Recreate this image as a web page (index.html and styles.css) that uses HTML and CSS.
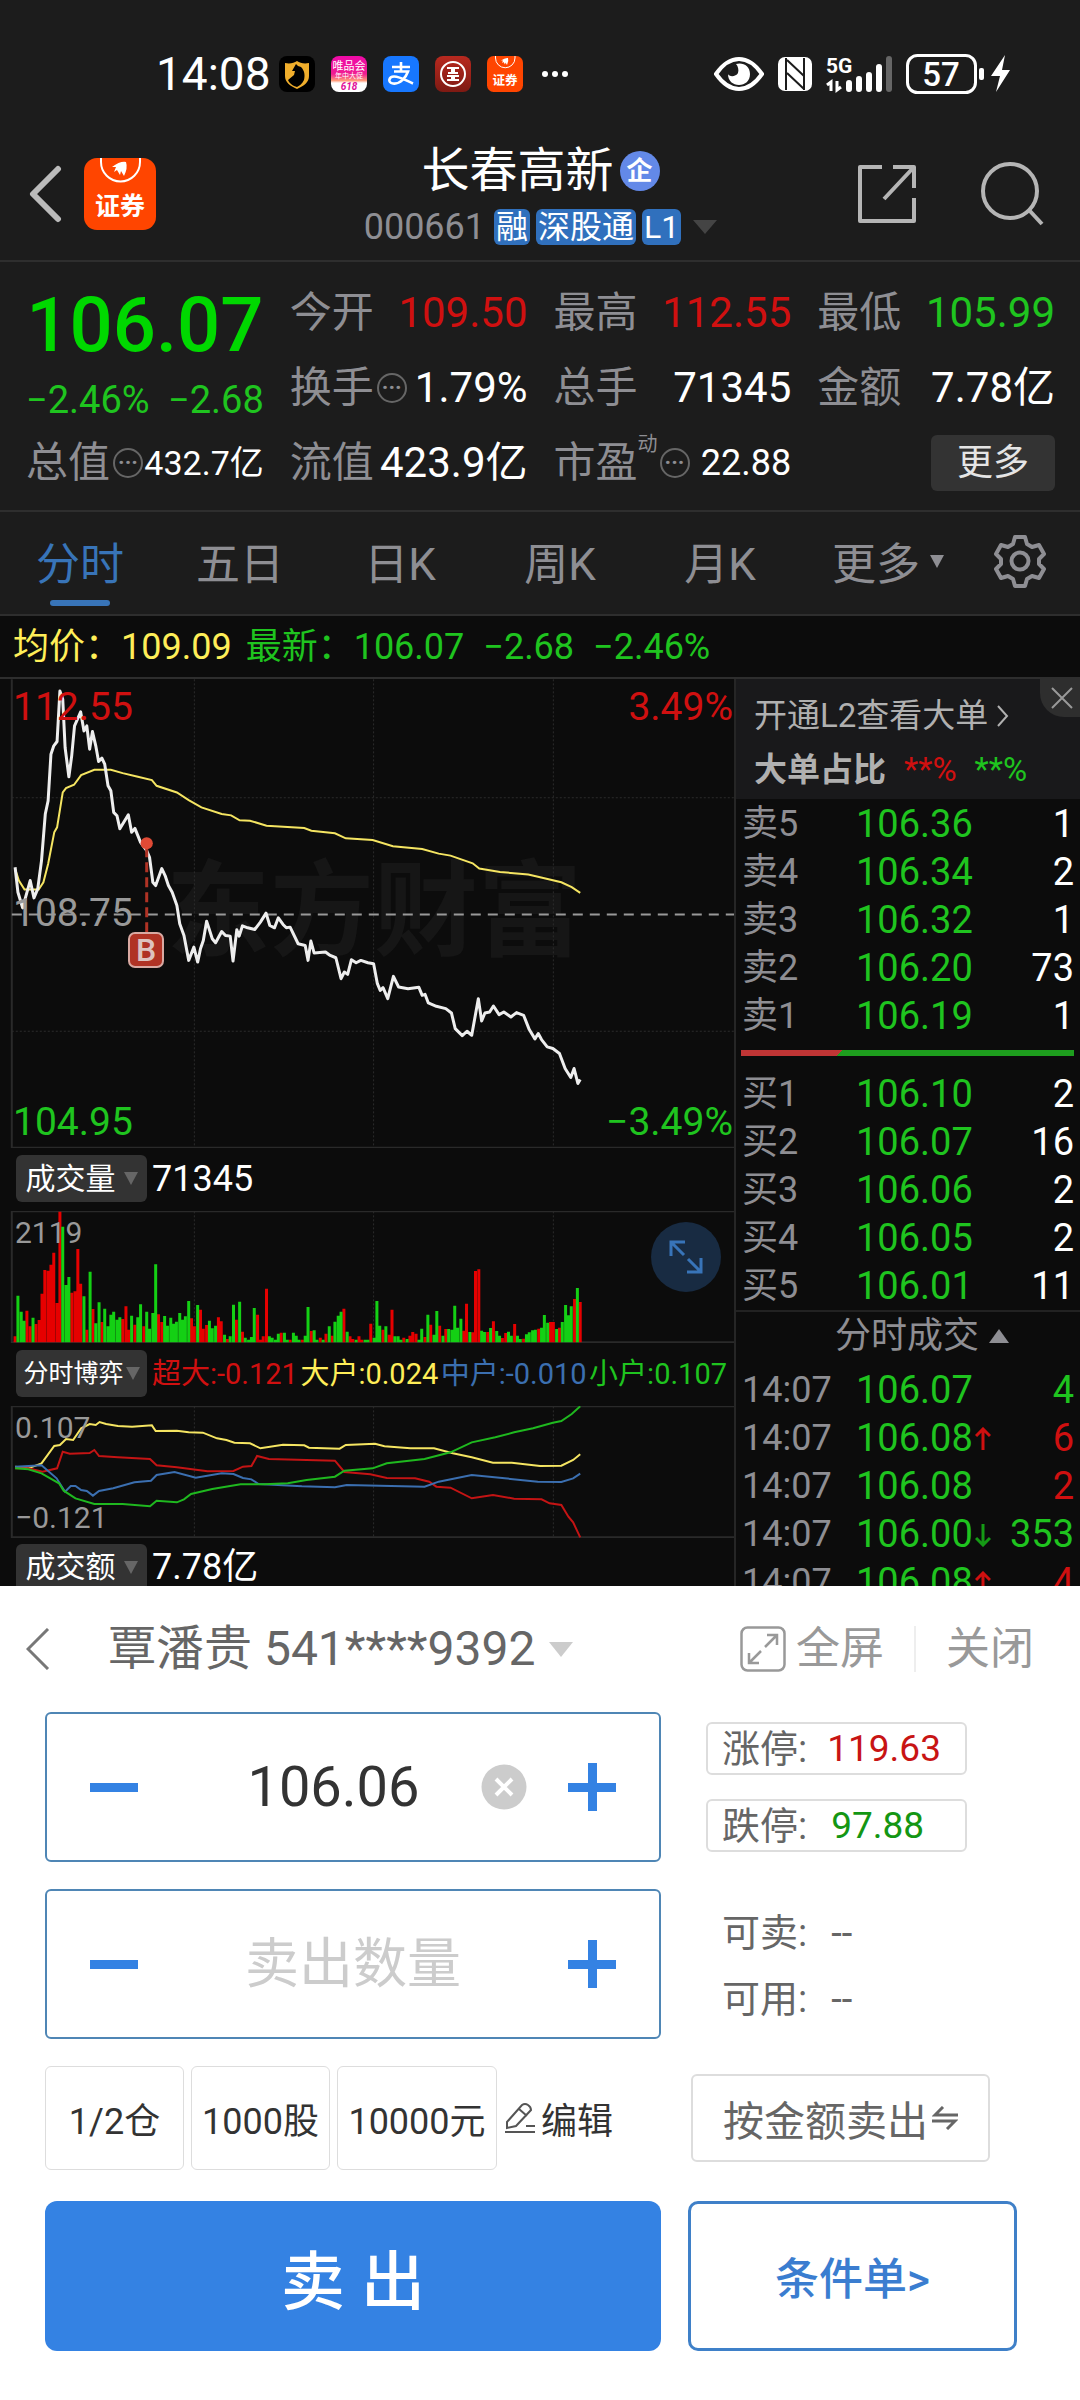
FILE: index.html
```html
<!DOCTYPE html>
<html lang="zh-CN">
<head>
<meta charset="utf-8">
<meta name="viewport" content="width=device-width, initial-scale=1">
<title>长春高新 000661</title>
<link rel="stylesheet" href="styles.css">
</head>
<body>
<div class="statusbar">
  <div class="status-left">
    <span class="clock">14:08</span>
    <svg class="app" viewBox="0 0 36 36"><rect width="36" height="36" rx="8" fill="#000"/><path d="M6 7c5 1 9 0 12-2 3 2 7 3 12 2v13c0 6-5 10-12 13C11 30 6 26 6 20z" fill="#f0ae2c"/><path d="M17 8l2 2 3 1c4 4 4 9 3 13-2 4-5 6-7 7-4-1-8-4-9-7l6-5 1-4-3 0z" fill="#000"/></svg>
    <svg class="app" viewBox="0 0 36 36"><defs><linearGradient id="vip" x1="0" y1="0" x2="0" y2="1"><stop offset="0" stop-color="#ef0aa8"/><stop offset=".5" stop-color="#f01d92"/><stop offset=".68" stop-color="#ff9a7a"/><stop offset=".75" stop-color="#fff"/></linearGradient></defs><rect width="36" height="36" rx="8" fill="url(#vip)"/><text x="18" y="14" font-size="11" fill="#fff" text-anchor="middle">唯品会</text><text x="18" y="22" font-size="7" fill="#fff" text-anchor="middle">年中大促</text><text x="18" y="34" font-size="10" font-weight="700" font-style="italic" fill="#e0109a" text-anchor="middle">618</text></svg>
    <svg class="app" viewBox="0 0 36 36"><rect width="36" height="36" rx="8" fill="#1777ff"/><path d="M9 11h18M18 6v9M11 15.500h14c-2 6-8 13-15 12-6-1-4-7 1-7 6 0 12 4 19 7" fill="none" stroke="#fff" stroke-width="2.600"/></svg>
    <svg class="app" viewBox="0 0 36 36"><defs><linearGradient id="bank" x1="0" y1="0" x2="0" y2="1"><stop offset="0" stop-color="#b8291f"/><stop offset="1" stop-color="#7e1a13"/></linearGradient></defs><rect width="36" height="36" rx="8" fill="url(#bank)"/><circle cx="18" cy="18" r="12" fill="none" stroke="#fff" stroke-width="2"/><path d="M12 12h5v5h-4M24 12h-5v5h4M12 24h5v-4h-5M24 24h-5v-4h5" fill="none" stroke="#fff" stroke-width="2"/></svg>
    <svg class="app" viewBox="0 0 72 72"><use href="#brand"/></svg>
    <svg class="dots" viewBox="0 0 28 8"><g fill="#fff"><circle cx="4" cy="4" r="3"/><circle cx="14" cy="4" r="3"/><circle cx="24" cy="4" r="3"/></g></svg>
  </div>
  <div class="status-right">
    <svg width="50" height="34" viewBox="0 0 50 34"><path d="M2 17C9 7 16 2 25 2s16 5 23 15C41 27 34 32 25 32S9 27 2 17z" fill="none" stroke="#fff" stroke-width="4"/><path d="M14 17c1 3 8 3 10-1 1-3 0-7-2-9 7-2 14 2 14 10 0 7-5 11-11 11S14 24 14 17z" fill="#fff"/></svg>
    <svg width="34" height="34" viewBox="0 0 34 34"><rect width="34" height="34" rx="7" fill="#fff"/><path d="M8 1v32M26 1v32M9 3l17 16M9 16l17 16" stroke="#1c1c1c" stroke-width="2" fill="none"/></svg>
    <svg width="66" height="38" viewBox="0 0 66 38"><text x="0" y="18" font-size="21" font-weight="700" fill="#fff">5G</text><path d="M5 36V27L1 30M11 26v9l4-3" fill="none" stroke="#fff" stroke-width="3"/><g stroke="#fff" stroke-width="6" stroke-linecap="round"><path d="M23 34V28M33 34V24M43 34V20M53 34V12"/><path d="M63 34V4" stroke="#666"/></g></svg>
    <svg width="108" height="40" viewBox="0 0 108 40"><rect x="1.500" y="1.500" width="68" height="37" rx="10" fill="none" stroke="#fff" stroke-width="3"/><text x="35" y="32" font-size="33" font-weight="500" fill="#fff" text-anchor="middle">57</text><rect x="73" y="14" width="5" height="12" rx="2" fill="#fff"/><path d="M99 1L85 22h9l-4 16 14-22h-8z" fill="#fff"/></svg>
  </div>
</div>

<header class="topbar">
  <div class="top-left">
    <button class="icon-btn" aria-label="返回"><svg width="34" height="58" viewBox="0 0 34 58"><path d="M30 4L5 29l25 25" fill="none" stroke="#bbb" stroke-width="6" stroke-linecap="round" stroke-linejoin="round"/></svg></button>
    <svg class="brand" viewBox="0 0 72 72"><g id="brand"><rect width="72" height="72" rx="13" fill="#ff4500"/><path d="M17 0v4a19.500 19.500 0 0 0 39 0V0" fill="none" stroke="#fff" stroke-width="2"/><path d="M28 9q8-6 14-5 2 6-2 14l-3-5-1 4-3-5-3 2 2-5z" fill="#fff"/><text x="36" y="57" font-size="25" font-weight="700" fill="#fff" text-anchor="middle">证券</text></g></svg>
  </div>
  <div class="title">
    <h1>长春高新<span class="corp">企</span></h1>
    <div class="code"><span>000661</span><b>融</b><b>深股通</b><b>L1</b><i class="caret"></i></div>
  </div>
  <div class="top-right">
    <button class="icon-btn" aria-label="分享"><svg width="60" height="60" viewBox="0 0 60 60"><path d="M25 3H3v54h54V34M36 3h21v21M57 3L27 35" fill="none" stroke="#b5b5b5" stroke-width="4" stroke-linejoin="round"/></svg></button>
    <button class="icon-btn" aria-label="搜索"><svg width="64" height="64" viewBox="0 0 64 64"><circle cx="29" cy="29" r="27" fill="none" stroke="#b5b5b5" stroke-width="4"/><path d="M48 48l13 14" stroke="#b5b5b5" stroke-width="4"/></svg></button>
  </div>
</header>

<section class="quote">
  <div class="qcol">
    <strong class="price">106.07</strong>
    <div class="change"><span>−2.46%</span><span>−2.68</span></div>
    <div class="stat small"><span>总值</span><i class="more-dot">···</i><em>432.7亿</em></div>
  </div>
  <div class="qcol">
    <div class="stat"><span>今开</span><em class="red">109.50</em></div>
    <div class="stat"><span>换手</span><i class="more-dot">···</i><em>1.79%</em></div>
    <div class="stat"><span>流值</span><em>423.9亿</em></div>
  </div>
  <div class="qcol">
    <div class="stat"><span>最高</span><em class="red">112.55</em></div>
    <div class="stat"><span>总手</span><em>71345</em></div>
    <div class="stat mid"><span>市盈<sup>动</sup></span><i class="more-dot">···</i><em>22.88</em></div>
  </div>
  <div class="qcol">
    <div class="stat"><span>最低</span><em class="green">105.99</em></div>
    <div class="stat"><span>金额</span><em>7.78亿</em></div>
    <div class="stat"><button class="more">更多</button></div>
  </div>
</section>

<nav class="tabs">
  <button class="active">分时</button><button>五日</button><button>日K</button><button>周K</button><button>月K</button><button class="tab-more">更多<i class="caret"></i></button>
  <button aria-label="设置"><svg width="54" height="54" viewBox="0 0 54 54"><g fill="none" stroke="#8e8e93" stroke-width="4" stroke-linejoin="round"><path d="M22 3h10l2 7 5 3 7-2 5 9-5 5v5l5 5-5 9-7-2-5 3-2 7H22l-2-7-5-3-7 2-5-9 5-5v-5l-5-5 5-9 7 2 5-3z"/><circle cx="27" cy="27" r="8.500"/></g></svg></button>
</nav>

<div class="avg"><span class="yellow">均价：109.09</span><span class="green">最新：106.07</span><span class="green second">−2.68</span><span class="green second">−2.46%</span></div>

<main class="market">
  <div class="charts">
    <div class="chart main-chart">
      <span class="watermark">东方财富</span>
      <svg viewBox="0 24 1556 1410" preserveAspectRatio="none">
        <path class="frame" d="M25 25V1433H1556"/>
        <path class="grid" d="M412 25V1433M792 25V1433M1173 25V1433M25 381H1556M25 1083H1556"/>
        <path class="midline" d="M25 732H1556"/>
        <polyline class="l-yellow" points="32,595 40,630 52,657 82,657 92,635 102,580 115,485 121,470 133,365 140,352 157,342 172,313 200,297 235,297 260,307 290,317 322,328 332,345 375,365 400,388 427,410 470,430 490,434 508,449 530,450 565,465 645,472 660,480 710,488 733,503 790,508 833,527 895,535 930,549 955,555 1002,578 1016,594 1060,604 1120,612 1145,620 1190,635 1212,650 1230,667"/>
        <polyline class="l-white" points="32,590 38,665 48,712 64,630 72,682 80,655 88,570 96,430 102,390 108,250 114,225 121,212 127,60 133,85 138,230 146,318 152,255 158,165 171,123 178,180 184,165 190,235 196,182 203,225 209,272 216,262 222,280 229,345 235,360 241,425 248,435 254,474 272,432 279,485 286,473 298,515 311,540 317,560 324,635 330,645 343,594 350,615 357,645 365,665 375,705 381,760 390,795 400,870 411,830 419,875 425,835 431,810 438,752 450,805 457,817 470,783 478,795 488,797 494,872 502,778 507,797 514,766 525,772 540,777 552,755 564,728 572,765 582,772 590,742 600,762 607,772 615,770 632,820 647,825 653,870 659,812 666,848 690,845 700,855 712,862 723,925 730,905 737,912 745,868 755,877 765,870 780,877 792,880 800,940 806,960 812,952 822,985 834,918 845,950 865,955 888,951 895,975 901,972 908,998 925,1008 945,1015 957,1028 965,1075 980,1096 990,1083 1000,1095 1014,985 1021,1052 1028,1028 1038,1025 1046,1007 1058,1033 1068,1025 1083,1040 1095,1027 1110,1035 1122,1078 1134,1106 1141,1090 1148,1108 1160,1130 1172,1135 1186,1150 1198,1195 1210,1222 1217,1195 1225,1240 1230,1228"/>
        <path class="trade-line" d="M311 530V790"/>
        <ellipse cx="311" cy="518" rx="13" ry="18" fill="#e04a35"/>
      </svg>
      <span class="axis tl red">112.55</span><span class="axis tr red">3.49%</span>
      <span class="axis ml">108.75</span>
      <span class="axis bl green">104.95</span><span class="axis br green">−3.49%</span>
      <span class="buy-mark">B</span>
    </div>
    <div class="bar"><button class="ind">成交量<i class="caret"></i></button><span>71345</span></div>
    <div class="chart sub-chart">
      <svg viewBox="0 214 1556 396" preserveAspectRatio="none">
        <path class="frame" d="M1556 215H25V608H1556"/>
        <path class="grid" d="M412 215V608M792 215V608M1173 215V608"/>
        <path id="vol-up" class="v-red"/><path id="vol-down" class="v-green"/>
      </svg>
      <span class="axis small tl">2119</span>
      <button class="expand" aria-label="放大"><svg width="34" height="34" viewBox="0 0 34 34"><path d="M2 16V2h14M3 3l12 12M32 18v14H18M31 31L19 19" fill="none" stroke="#3874b8" stroke-width="3"/></svg></button>
    </div>
    <div class="bar"><button class="ind four">分时博弈<i class="caret"></i></button><div class="legend"><span class="red">超大:-0.121</span><span class="yellow">大户:0.024</span><span class="blue">中户:-0.010</span><span class="green">小户:0.107</span></div></div>
    <div class="chart sub-chart">
      <svg viewBox="0 798 1556 396" preserveAspectRatio="none">
        <path class="frame" d="M1556 799H25V1192H1556"/>
        <path class="grid" d="M412 799V1192M792 799V1192M1173 799V1192"/>
        <polyline class="l-yellow" points="32,980 60,985 88,970 115,918 127,915 140,897 155,900 172,865 190,852 203,855 211,846 225,852 250,858 280,860 322,856 330,873 375,872 400,877 430,878 460,895 480,900 497,908 530,910 552,925 600,914 645,916 655,923 720,926 733,915 795,911 815,919 870,925 920,925 960,940 1000,952 1045,968 1085,968 1145,978 1190,977 1215,960 1230,943"/>
        <polyline class="l-red" points="32,985 60,985 90,995 121,985 133,935 148,941 190,939 200,930 210,948 250,952 318,957 332,976 375,982 440,994 495,993 515,980 533,978 545,948 570,957 650,960 710,962 730,996 785,1003 820,1014 880,1015 910,1025 925,1040 955,1043 1000,1075 1045,1065 1090,1076 1148,1078 1165,1090 1190,1095 1205,1130 1215,1147 1230,1192"/>
        <polyline class="l-blue" points="32,980 88,976 120,1015 138,1055 150,1038 160,1038 172,1050 184,1053 197,1067 210,1053 240,1045 285,1027 320,1022 332,1005 370,996 415,1013 470,1000 495,1002 515,1014 533,1018 548,1032 640,1039 710,1042 735,1035 900,1040 930,1025 1000,1005 1070,1015 1140,1025 1190,1026 1215,1015 1230,1001"/>
        <polyline class="l-green" points="32,985 60,988 88,1000 125,1030 135,1052 160,1075 200,1092 260,1092 318,1099 332,1082 375,1087 390,1078 405,1062 450,1047 510,1033 560,1033 610,1030 650,1020 710,1010 730,992 790,985 820,970 900,957 955,937 1000,907 1050,892 1090,877 1130,865 1172,848 1190,843 1212,822 1230,799"/>
      </svg>
      <span class="axis small tl">0.107</span><span class="axis small bl">−0.121</span>
    </div>
    <div class="bar last"><button class="ind">成交额<i class="caret"></i></button><span>7.78亿</span></div>
  </div>

  <aside class="book">
    <div class="promo">
      <a href="#l2">开通L2查看大单<svg width="12" height="22" viewBox="0 0 12 22"><path d="M1 1l9 10-9 10" fill="none" stroke="#b0b0b0" stroke-width="2"/></svg></a>
      <p><strong>大单占比</strong><span class="red">**%</span><span class="green">**%</span></p>
      <button class="close" aria-label="关闭提示"><svg width="22" height="22" viewBox="0 0 22 22"><path d="M1 1l20 20M21 1L1 21" stroke="#999" stroke-width="2"/></svg></button>
    </div>
    <table class="levels sells">
      <tr><th>卖5</th><td class="green">106.36</td><td>1</td></tr>
      <tr><th>卖4</th><td class="green">106.34</td><td>2</td></tr>
      <tr><th>卖3</th><td class="green">106.32</td><td>1</td></tr>
      <tr><th>卖2</th><td class="green">106.20</td><td>73</td></tr>
      <tr><th>卖1</th><td class="green">106.19</td><td>1</td></tr>
    </table>
    <div class="ratio"></div>
    <table class="levels">
      <tr><th>买1</th><td class="green">106.10</td><td>2</td></tr>
      <tr><th>买2</th><td class="green">106.07</td><td>16</td></tr>
      <tr><th>买3</th><td class="green">106.06</td><td>2</td></tr>
      <tr><th>买4</th><td class="green">106.05</td><td>2</td></tr>
      <tr><th>买5</th><td class="green">106.01</td><td>11</td></tr>
    </table>
    <h2 class="ticks-title">分时成交<i class="caret up"></i></h2>
    <table class="levels">
      <tr><th>14:07</th><td class="green">106.07</td><td class="green">4</td></tr>
      <tr><th>14:07</th><td class="green">106.08<svg class="arr" viewBox="0 0 16 24"><path d="M8 23V2M1 9l7-7 7 7" fill="none" stroke="#d01010" stroke-width="3"/></svg></td><td class="red">6</td></tr>
      <tr><th>14:07</th><td class="green">106.08</td><td class="red">2</td></tr>
      <tr><th>14:07</th><td class="green">106.00<svg class="arr" viewBox="0 0 16 24"><path d="M8 1v21M1 15l7 7 7-7" fill="none" stroke="#159a15" stroke-width="3"/></svg></td><td class="green">353</td></tr>
      <tr><th>14:07</th><td class="green">106.08<svg class="arr" viewBox="0 0 16 24"><path d="M8 23V2M1 9l7-7 7 7" fill="none" stroke="#d01010" stroke-width="3"/></svg></td><td class="red">4</td></tr>
    </table>
  </aside>
</main>

<section class="sheet">
  <div class="account">
    <button class="icon-btn" aria-label="收起"><svg width="24" height="42" viewBox="0 0 24 42"><path d="M22 1L2 21l20 20" fill="none" stroke="#777" stroke-width="3"/></svg></button>
    <button class="holder">覃潘贵 541****9392<i class="caret"></i></button>
    <button class="full"><svg width="46" height="46" viewBox="0 0 46 46"><g fill="none" stroke="#999" stroke-width="2.500"><rect x="1.500" y="1.500" width="43" height="43" rx="6"/><path d="M27 9h10v10M37 9L25 21M9 27v10h10M9 37l12-12"/></g></svg>全屏</button>
    <button class="shut">关闭</button>
  </div>
  <form class="order" onsubmit="return false">
    <div class="field price-field">
      <button type="button" class="step" aria-label="减价"></button>
      <input type="text" value="106.06" aria-label="卖出价格">
      <button type="button" class="clear" aria-label="清除"><svg width="46" height="46" viewBox="0 0 46 46"><circle cx="23" cy="23" r="22.500" fill="#ccc"/><path d="M15 15l16 16M31 15L15 31" stroke="#fff" stroke-width="4"/></svg></button>
      <button type="button" class="step plus" aria-label="加价"></button>
    </div>
    <div class="side limits">
      <div class="limit">涨停:<span class="up">119.63</span></div>
      <div class="limit">跌停:<span class="down">97.88</span></div>
    </div>
    <div class="field">
      <button type="button" class="step" aria-label="减量"></button>
      <input type="text" placeholder="卖出数量" aria-label="卖出数量">
      <button type="button" class="step plus" aria-label="加量"></button>
    </div>
    <div class="side avail"><div>可卖:<span>--</span></div><div>可用:<span>--</span></div></div>
    <div class="chips">
      <button type="button" class="chip">1/2仓</button><button type="button" class="chip">1000股</button><button type="button" class="chip wide">10000元</button>
      <button type="button" class="edit"><svg width="32" height="32" viewBox="0 0 32 32"><path d="M3 20L18 3q3-2 6 0t3 5L12 24l-9 2zM15 7l8 7M1 30h30M22 24h9" fill="none" stroke="#555" stroke-width="2"/></svg>编辑</button>
    </div>
    <div class="side by"><button type="button" class="by-amount">按金额卖出<svg width="26" height="24" viewBox="0 0 26 24"><path d="M26 9H3l8-8M0 15h23l-8 8" fill="none" stroke="#666" stroke-width="3"/></svg></button></div>
    <button class="sell">卖 出</button>
    <div class="side cond"><button type="button" class="condition">条件单&gt;</button></div>
  </form>
</section>
<script src="volume.js"></script>
</body>
</html>
```
FILE: styles.css
```css
* { box-sizing: border-box; }
body {
  margin: 0;
  background: #fff;
  font-family: Roboto, "Noto Sans CJK SC", sans-serif;
  color: #fff;
}
button {
  margin: 0;
  padding: 0;
  border: 0;
  background: none;
  color: inherit;
  font: inherit;
}
svg { display: block; flex: none; }
h1, h2, p { margin: 0; font-weight: 400; }
em, i { font-style: normal; }
.icon-btn { display: flex; }

.red { color: #d01010; }
.green { color: #1fc41f; }
.yellow { color: #ffee58; }
.blue { color: #3b6fb0; }

.caret {
  display: inline-block;
  border: 7px solid transparent;
  border-top: 13px solid #666;
  border-bottom: 0;
}

/* status bar */
.statusbar {
  display: flex;
  justify-content: space-between;
  align-items: center;
  height: 128px;
  padding: 20px 66px 0 156px;
  background: #1c1c1c;
}
.status-left, .status-right { display: flex; align-items: center; }
.status-left { gap: 16px; }
.status-right { gap: 14px; }
.clock { width: 107px; font-size: 46px; line-height: 48px; }
.app { width: 36px; height: 36px; }
.dots { width: 28px; height: 8px; margin-left: 2px; }

/* title bar */
.topbar {
  display: grid;
  grid-template-columns: 1fr auto 1fr;
  align-items: center;
  height: 134px;
  padding: 0 35px 0 28px;
  background: #1c1c1c;
  border-bottom: 2px solid #2e2e2e;
}
.top-left, .top-right { display: flex; align-items: center; }
.top-left { gap: 22px; }
.top-right { gap: 64px; justify-content: flex-end; }
.brand { width: 72px; height: 72px; }
.title { display: flex; flex-direction: column; align-items: center; gap: 14px; padding: 4px 0 0 8px; }
.title h1 { display: flex; align-items: center; gap: 6px; font-size: 48px; line-height: 48px; }
.corp {
  width: 40px;
  border-radius: 50%;
  background: #6389e8;
  font-size: 26px;
  font-weight: 700;
  line-height: 40px;
  text-align: center;
}
.code { display: flex; align-items: center; gap: 6px; color: #8e8e93; font-size: 36px; line-height: 36px; }
.code span { margin-right: 3px; }
.code b {
  padding: 0 2px;
  border-radius: 6px;
  background: #3070bd;
  color: #fff;
  font-size: 32px;
  font-weight: 400;
}
.code .caret { margin-left: 6px; border-width: 14px 12px 0; border-top-color: #444; }

/* quote */
.quote {
  display: grid;
  grid-template-columns: repeat(4, minmax(0, 1fr));
  gap: 26px;
  padding: 13px 25px 10px 26px;
  background: #1c1c1c;
  border-bottom: 2px solid #2e2e2e;
}
.price { display: block; height: 96px; color: #00d800; font-size: 76px; font-weight: 500; line-height: 100px; text-align: center; }
.change { display: flex; justify-content: space-between; height: 54px; color: #1fc41f; font-size: 38px; line-height: 58px; }
.stat { display: flex; align-items: center; height: 75px; font-size: 42px; line-height: 48px; white-space: nowrap; }
.stat span { position: relative; color: #8e8e93; }
.stat em { margin-left: auto; }
.small em { font-size: 34px; }
.mid em { font-size: 36px; }
.stat sup { position: absolute; left: 84px; top: -7px; font-size: 20px; line-height: 24px; }
.more-dot {
  width: 30px;
  height: 30px;
  margin-left: 3px;
  border: 2px solid #666;
  border-radius: 50%;
  color: #8e8e93;
  font-size: 22px;
  font-weight: 700;
  line-height: 25px;
  text-align: center;
}
.mid .more-dot { margin-left: 22px; }
.more { width: 124px; height: 56px; margin-left: auto; border-radius: 6px; background: #333; color: #e5e5e5; font-size: 36px; }

/* tabs */
.tabs { display: grid; grid-template-columns: repeat(6, 4fr) 3fr; height: 104px; background: #1c1c1c; color: #8e8e93; font-size: 44px; border-bottom: 2px solid #2e2e2e; }
.tabs button { position: relative; display: flex; align-items: center; justify-content: center; padding-bottom: 4px; }
.tabs .active { color: #3874b8; }
.tabs .active::after { content: ""; position: absolute; left: calc(50% - 30px); bottom: 8px; width: 60px; height: 6px; border-radius: 3px; background: #3874b8; }
.tabs .tab-more { gap: 10px; padding-left: 16px; }
.tabs .caret { border-top-color: #8e8e93; }

.avg { display: flex; gap: 14px; height: 61px; padding-left: 13px; background: #0c0c0c; font-size: 36px; line-height: 62px; white-space: nowrap; }
.avg .second { margin-left: 5px; }

/* charts */
.market { display: grid; grid-template-columns: 734fr 346fr; height: 909px; overflow: hidden; background: #0c0c0c; border-top: 2px solid #2e2e2e; }
.chart { position: relative; }
.chart > svg { position: relative; width: 100%; height: 100%; }
.main-chart { height: 469px; }
.sub-chart { height: 132px; }
.chart path, .chart polyline { fill: none; vector-effect: non-scaling-stroke; }
.frame { stroke: #2a2a2a; stroke-width: 2px; }
.grid { stroke: #2c2c2c; stroke-width: 1px; stroke-dasharray: 2 2; }
.midline { stroke: #999; stroke-width: 2px; stroke-dasharray: 10 7; }
.l-white { stroke: #eee; stroke-width: 3px; stroke-linejoin: round; }
.l-yellow { stroke: #f5e562; stroke-width: 2px; }
.l-red { stroke: #c41414; stroke-width: 2px; }
.l-blue { stroke: #3b6fb0; stroke-width: 2px; }
.l-green { stroke: #1fb81f; stroke-width: 2px; }
.trade-line { stroke: #b03325; stroke-width: 3px; stroke-dasharray: 10 5; }
.v-red { stroke: #e60000; stroke-width: 3px; }
.v-green { stroke: #14d014; stroke-width: 3px; }
.watermark { position: absolute; left: 166px; top: 174px; color: #161616; font-size: 104px; font-weight: 700; line-height: 120px; }
.axis { position: absolute; font-size: 39px; line-height: 40px; }
.axis:not(.red):not(.green) { color: #999; }
.tl { left: 13px; top: 8px; }
.tr { right: 1px; top: 8px; }
.ml { left: 13px; top: 214px; }
.bl { left: 13px; bottom: 6px; }
.br { right: 1px; bottom: 6px; }
.axis.small { left: 15px; font-size: 30px; line-height: 28px; }
.buy-mark {
  position: absolute;
  left: 128px;
  top: 253px;
  width: 36px;
  height: 36px;
  border: 2px solid #d9a9a2;
  border-radius: 7px;
  background: #b03325;
  color: #ddc4c0;
  font-size: 32px;
  font-weight: 500;
  line-height: 33px;
  text-align: center;
}
.bar { display: flex; align-items: center; gap: 5px; height: 63px; padding: 0 7px 2px 16px; font-size: 36px; line-height: 42px; white-space: nowrap; }
.bar.last { height: 60px; }
.ind { display: flex; flex: none; align-items: center; justify-content: center; gap: 8px; width: 131px; height: 47px; border-radius: 6px; background: #333; font-size: 30px; }
.ind.four { gap: 2px; font-size: 25px; }
.legend { display: flex; flex: 1; justify-content: space-between; font-size: 29px; }
.expand { position: absolute; right: 13px; top: 11px; display: flex; align-items: center; justify-content: center; width: 70px; height: 70px; border-radius: 50%; background: #182b42; }

/* order book */
.book { border-left: 2px solid #262626; }
.promo { position: relative; height: 120px; padding: 13px 0 0 18px; background: #19191b; color: #b0b0b0; font-size: 33px; }
.promo a { display: flex; align-items: center; gap: 9px; color: inherit; line-height: 48px; text-decoration: none; }
.promo p { display: flex; gap: 18px; line-height: 60px; }
.promo strong { font-weight: 700; }
.close { position: absolute; right: 0; top: 0; display: flex; align-items: center; justify-content: center; width: 40px; height: 38px; padding-left: 4px; border-bottom-left-radius: 24px; background: #2e2e2e; }
.levels { width: 100%; border-collapse: collapse; table-layout: fixed; font-size: 38px; }
.sells { margin-top: 1px; }
.levels tr { height: 48px; }
.levels th { width: 120px; padding: 0 0 0 6px; color: #8e8e93; font-size: 36px; font-weight: 400; line-height: 44px; text-align: left; }
.levels td { padding: 0; line-height: 44px; white-space: nowrap; }
.levels td:last-child { width: 76px; padding-right: 6px; text-align: right; }
.arr { display: inline-block; width: 16px; height: 24px; margin-left: 2px; }
.ratio { height: 6px; margin: 10px 6px 14px 5px; background: linear-gradient(135deg, #c03535 0 30%, #1e9e1e 30%); }
.ticks-title { display: flex; align-items: center; justify-content: center; gap: 10px; height: 56px; padding: 0 0 6px 28px; border-top: 2px solid #222; color: #8e8e93; font-size: 36px; line-height: 44px; }
.caret.up { border: 10px solid transparent; border-top: 0; border-bottom: 14px solid #8e8e93; }

/* order sheet */
.sheet { padding-bottom: 50px; color: #666; }
.account { display: flex; align-items: center; height: 126px; padding: 0 46px 0 26px; font-size: 48px; line-height: 56px; white-space: nowrap; }
.holder { display: flex; align-items: center; gap: 14px; margin: 0 auto 0 58px; }
.holder .caret { border-width: 15px 12px 0; border-top-color: #ccc; }
.full { display: flex; align-items: center; gap: 10px; padding-right: 30px; border-right: 2px solid #eee; color: #999; font-size: 44px; line-height: 46px; }
.shut { padding-left: 30px; color: #999; font-size: 44px; }
.order { display: grid; grid-template-columns: 616fr 374fr; row-gap: 27px; padding: 0 45px; }
.field { display: flex; align-items: center; height: 150px; padding: 0 43px; border: 2px solid #4f86b5; border-radius: 6px; }
.field input { flex: 1; width: 0; padding: 0; border: 0; outline: 0; background: none; color: #333; font: inherit; font-size: 54px; text-align: center; }
.price-field input { padding-left: 48px; font-size: 56px; }
.field input::placeholder { color: #ccc; opacity: 1; }
.step { width: 48px; height: 48px; background: linear-gradient(#3482e3, #3482e3) center / 48px 9px no-repeat; }
.plus { background: linear-gradient(#3482e3, #3482e3) center / 48px 9px no-repeat, linear-gradient(#3482e3, #3482e3) center / 9px 48px no-repeat; }
.clear { margin-right: 41px; }
.side { font-size: 38px; }
.limits { display: flex; flex-direction: column; gap: 24px; padding: 10px 0 0 45px; }
.limit { display: flex; align-items: center; gap: 20px; width: 261px; height: 53px; padding-left: 14px; border: 2px solid #ddd; border-radius: 6px; line-height: 44px; }
.up, .down { font-size: 37px; }
.up { color: #c81414; }
.down { padding-left: 4px; color: #149614; }
.avail { padding: 11px 0 0 61px; line-height: 66px; }
.avail span { margin-left: 24px; }
.chips { display: flex; align-items: center; gap: 7px; color: #333; font-size: 36px; }
.chip { width: 139px; height: 104px; border: 1px solid #ddd; border-radius: 6px; }
.chip.wide { width: 160px; }
.edit { display: flex; align-items: center; gap: 5px; }
.by { display: flex; align-items: center; padding-left: 30px; }
.by-amount { display: flex; align-items: center; justify-content: center; gap: 4px; width: 299px; height: 88px; border: 2px solid #ddd; border-radius: 6px; font-size: 41px; }
.sell { height: 150px; margin-top: 4px; border-radius: 12px; background: #3482e3; color: #fff; font-size: 64px; font-weight: 500; }
.cond { padding: 4px 0 0 27px; }
.condition { width: 329px; height: 150px; border: 3px solid #3f80c8; border-radius: 10px; color: #3a7dd0; font-size: 44px; font-weight: 500; }
```
FILE: volume.js
```js
// One entry per minute: bar top on the chart's scale; negative means a down minute.
const tops = [
  590, -468, -516, -543, 513, 560, -534, 553, 541, 462, 391, 393, 375, 339, 490, 216, -261, -436, -412, 459,
  455, 328, 432, -470, 570, -396, 508, -551, -488, 547, -507, -560, -525, -516, -540, -533, 538, 500, 570, -528,
  555, -533, -494, 560, -516, -567, -520, -374, 524, 547, -529, -558, -534, -552, -546, -520, -540, -530, -484, 536,
  560, -496, 510, 567, 556, -543, -566, -558, 533, 545, -585, 598, -590, -495, 540, -486, 576, -594, -600, -592,
  -505, 525, 600, 590, 447, -590, -594, -600, -582, 579, -579, -600, 600, -579, -588, -600, 600, -588, -502, 574,
  -572, -600, 594, -600, 582, -560, 588, -546, -528, -516, 507, -576, 590, 598, -600, 590, 600, -600, -600, 552,
  -594, -484, -558, 570, -560, 585, 510, -590, -590, -600, 594, -598, 588, 577, 582, -600, -567, 592, -525, 555,
  -585, -514, 558, -588, 568, -568, -570, -498, -564, -537, 573, 492, -577, 578, 394, 389, -573, -577, 577, -565,
  545, -574, -588, 595, 580, -576, -588, 553, -588, -598, 597, -584, -578, -572, -570, 567, -564, -526, -549, 547,
  547, -568, 564, -547, -496, -527, -500, 478, -445, 487
];
const paths = { up: "", down: "" };
tops.forEach((top, i) => {
  const x = Math.round(32 + i * 6.34);
  paths[top > 0 ? "up" : "down"] += `M${x} 608V${Math.abs(top)}`;
});
document.getElementById("vol-up").setAttribute("d", paths.up);
document.getElementById("vol-down").setAttribute("d", paths.down);
```
